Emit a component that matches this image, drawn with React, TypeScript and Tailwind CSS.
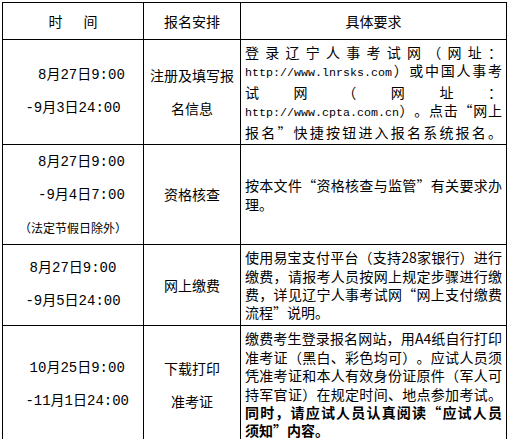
import React from 'react'

const cell = 'border border-black align-middle p-0'
const mono = "font-['Liberation_Mono','Noto_Sans_CJK_SC',monospace]"

function Line({ children, fill = true }: { children: React.ReactNode; fill?: boolean }) {
  return (
    <div className={fill ? 'text-justify [text-align-last:justify]' : 'text-left'}>{children}</div>
  )
}

function Url({ children }: { children: React.ReactNode }) {
  return <span className="font-['Liberation_Mono',monospace] text-[11.67px]">{children}</span>
}

function Time({ lines, note }: { lines: string[]; note?: string }) {
  return (
    <div className={`${mono} text-[14px] leading-[33px] text-center whitespace-pre`}>
      {lines.map((l) => (
        <div key={l}>{l}</div>
      ))}
      {note && (
        <div className="font-['Noto_Sans_CJK_SC',sans-serif] text-[12px] leading-[31px]">{note}</div>
      )}
    </div>
  )
}

function Plan({ lines }: { lines: string[] }) {
  return (
    <div className="text-[14px] leading-[33px] text-center">
      {lines.map((l) => (
        <div key={l}>{l}</div>
      ))}
    </div>
  )
}

export default function App() {
  return (
    <div className="bg-white w-[509px] h-[439px] pt-[2px] pl-[2px] font-['Noto_Sans_CJK_SC',sans-serif] text-black [text-spacing-trim:space-all]">
      <table className="border-collapse table-fixed w-[504px]">
        <colgroup>
          <col className="w-[141px]" />
          <col className="w-[97px]" />
          <col className="w-[266px]" />
        </colgroup>
        <tbody>
          <tr className="h-[37px]">
            <td className={`${cell} text-center text-[14px]`}>
              时<span className="inline-block w-[21px]" />间
            </td>
            <td className={`${cell} text-center text-[14px]`}>报名安排</td>
            <td className={`${cell} text-center text-[14px]`}>具体要求</td>
          </tr>
          <tr className="h-[98px]">
            <td className={cell}>
              <Time lines={['\u00a0\u00a08月27日9:00', '-9月3日24:00']} />
            </td>
            <td className={cell}>
              <Plan lines={['注册及填写报', '名信息']} />
            </td>
            <td className={`${cell} px-[4px] py-[3px] text-[14px] leading-[18.4px]`}>
              <Line>登录辽宁人事考试网（网址：</Line>
              <Line>
                <Url>http://www.lnrsks.com</Url>）或中国人事考
              </Line>
              <Line>试网（网址：</Line>
              <Line>
                <Url>http://www.cpta.com.cn</Url>）。点击“网上
              </Line>
              <Line>报名”快捷按钮进入报名系统报名。</Line>
            </td>
          </tr>
          <tr className="h-[100px]">
            <td className={cell}>
              <Time lines={['\u00a0\u00a08月27日9:00', '\u00a0\u00a0-9月4日7:00']} note="（法定节假日除外）" />
            </td>
            <td className={cell}>
              <Plan lines={['资格核查']} />
            </td>
            <td className={`${cell} px-[4px] py-[3px] text-[14px] leading-[18.4px]`}>
              <Line>按本文件“资格核查与监管”有关要求办</Line>
              <Line fill={false}>理。</Line>
            </td>
          </tr>
          <tr className="h-[81px]">
            <td className={cell}>
              <Time lines={['8月27日9:00', '-9月5日24:00']} />
            </td>
            <td className={cell}>
              <Plan lines={['网上缴费']} />
            </td>
            <td className={`${cell} px-[4px] py-[3px] text-[14px] leading-[18.4px]`}>
              <Line>使用易宝支付平台（支持28家银行）进行</Line>
              <Line>缴费，请报考人员按网上规定步骤进行缴</Line>
              <Line>费，详见辽宁人事考试网“网上支付缴费</Line>
              <Line fill={false}>流程”说明。</Line>
            </td>
          </tr>
          <tr className="h-[118px]">
            <td className={cell}>
              <Time lines={['\u00a010月25日9:00', '\u00a0-11月1日24:00']} />
            </td>
            <td className={cell}>
              <Plan lines={['下载打印', '准考证']} />
            </td>
            <td className={`${cell} px-[4px] py-[3px] text-[14px] leading-[18.4px]`}>
              <Line>缴费考生登录报名网站，用A4纸自行打印</Line>
              <Line>准考证（黑白、彩色均可）。应试人员须</Line>
              <Line>凭准考证和本人有效身份证原件（军人可</Line>
              <Line>持军官证）在规定时间、地点参加考试。</Line>
              <div className="font-bold">
                <Line>同时，请应试人员认真阅读“应试人员</Line>
                <Line fill={false}>须知”内容。</Line>
              </div>
            </td>
          </tr>
        </tbody>
      </table>
    </div>
  )
}
